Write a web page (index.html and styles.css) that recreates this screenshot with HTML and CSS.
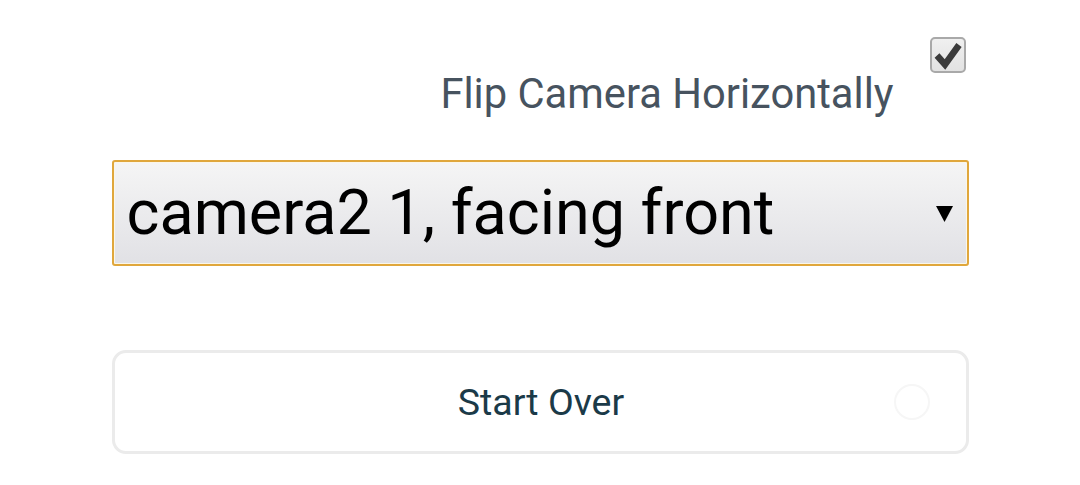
FILE: index.html
```html
<!DOCTYPE html>
<html>
<head>
<meta charset="utf-8">
<link rel="stylesheet" href="styles.css">
</head>
<body>
<div class="page">
  <div class="flip-row">
    <span class="flip-label">Flip Camera Horizontally</span>
    <span class="checkbox">
      <svg viewBox="0 0 32 32" width="32" height="32"><path d="M5 16.5 L13 25.5 L27 6" fill="none" stroke="#3b3b3b" stroke-width="6.5" stroke-linejoin="miter" stroke-linecap="butt"/></svg>
    </span>
  </div>
  <div class="select">
    <span class="select-text">camera2 1, facing front</span>
    <span class="select-arrow">
      <svg viewBox="0 0 17 17" width="17" height="17"><path d="M0 1 H17 L8.5 17 Z" fill="#000"/></svg>
    </span>
  </div>
  <div class="button">
    <span class="button-text">Start Over</span>
    <span class="spinner"></span>
  </div>
</div>
</body>
</html>
```

FILE: styles.css
```css
html, body {
  margin: 0;
  padding: 0;
  background: #ffffff;
}
body {
  font-family: Roboto, "Liberation Sans", sans-serif;
}
.page {
  width: 857px;
  margin: 0 auto;
  padding-top: 37px;
}
.flip-row {
  display: flex;
  justify-content: flex-end;
  align-items: flex-start;
  height: 123px;
}
.flip-label {
  font-size: 41.7px;
  line-height: 48px;
  color: #47535f;
  margin-top: 33px;
  margin-right: 36px;
}
.checkbox {
  width: 32px;
  height: 32px;
  border: 2px solid #a9a9a9;
  border-radius: 5px;
  background: linear-gradient(#f0f0f0, #e2e2e2);
  display: flex;
  align-items: center;
  justify-content: center;
  margin-right: 3px;
}
.select {
  height: 102px;
  border: 2px solid #e0a73c;
  border-radius: 3px;
  background: linear-gradient(#f5f5f5, #e1e1e5);
  display: flex;
  align-items: center;
  justify-content: space-between;
  padding: 0 14px 0 13px;
  box-shadow: inset 0 0 0 1px #fbf6e8;
}
.select-text {
  font-size: 62.9px;
  line-height: 74px;
  color: #000;
  margin-top: -1px;
}
.select-arrow {
  display: flex;
  margin-top: 1px;
}
.button {
  margin-top: 84px;
  height: 98px;
  border: 3px solid #ebebeb;
  border-radius: 14px;
  display: flex;
  align-items: center;
  justify-content: center;
  position: relative;
}
.button-text {
  font-size: 37.5px;
  line-height: 44px;
  color: #1b3a48;
  margin-left: 2px;
}
.spinner {
  position: absolute;
  right: 36px;
  top: 31px;
  width: 32px;
  height: 32px;
  border: 2px solid #f6f6f6;
  border-radius: 50%;
}
```
